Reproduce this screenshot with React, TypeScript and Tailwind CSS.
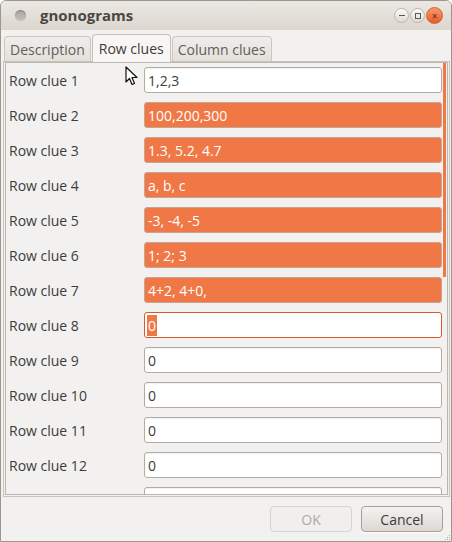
import React from 'react';

const font = { fontFamily: '"Open Sans", "Liberation Sans", sans-serif' };

type Clue = { value: string; bad?: boolean; focus?: boolean };

const clues: Clue[] = [
  { value: '1,2,3' },
  { value: '100,200,300', bad: true },
  { value: '1.3, 5.2, 4.7', bad: true },
  { value: 'a, b, c', bad: true },
  { value: '-3, -4, -5', bad: true },
  { value: '1; 2; 3', bad: true },
  { value: '4+2, 4+0,', bad: true },
  { value: '0', focus: true },
  { value: '0' },
  { value: '0' },
  { value: '0' },
  { value: '0' },
  { value: '' },
];

function Entry({ clue }: { clue: Clue }) {
  if (clue.bad) {
    return (
      <div className="flex h-[26px] w-[298px] items-center rounded-[3px] border border-[#c9a491] bg-[#f07846] px-[3px] text-[14px] text-white">
        {clue.value}
      </div>
    );
  }
  if (clue.focus) {
    return (
      <div className="flex h-[26px] w-[298px] items-center rounded-[3px] border border-[#d9592c] bg-white px-[2px] text-[14px]">
        <span className="bg-[#f07846] px-[1px] text-white">{clue.value}</span>
      </div>
    );
  }
  return (
    <div className="flex h-[26px] w-[298px] items-center rounded-[3px] border border-[#b4aca4] bg-white px-[3px] text-[14px] text-[#3c3c3c] shadow-[inset_0_1px_1px_rgba(0,0,0,0.06)]">
      {clue.value}
    </div>
  );
}

function Tab({ label, active }: { label: string; active?: boolean }) {
  if (active) {
    return (
      <div className="relative z-10 -mb-px flex h-[28px] items-center rounded-t-[4px] border border-b-0 border-[#c8c2ba] bg-[#f7f6f5] px-[6px] text-[14px] text-[#3c3c3c]">
        {label}
      </div>
    );
  }
  return (
    <div className="flex h-[25px] items-center rounded-t-[4px] border border-b-0 border-[#cdc7bf] bg-gradient-to-b from-[#efedea] to-[#e3e0dc] px-[5px] text-[14px] text-[#5f5e5b]">
      {label}
    </div>
  );
}

export default function App() {
  return (
    <div
      style={font}
      className="flex h-[542px] w-[452px] flex-col overflow-hidden rounded-t-[6px] border border-[#9e978e] bg-[#f2f1f0] text-[#3c3c3c]"
    >
      {/* title bar */}
      <div className="flex h-[29px] shrink-0 items-center bg-gradient-to-b from-[#ebe8e3] to-[#dcd7cf] pl-[14px] pr-[8px]">
        <div className="h-[11px] w-[11px] rounded-full bg-gradient-to-b from-[#a9a59e] to-[#c7c3bc] shadow-[inset_0_1px_1px_rgba(0,0,0,0.25)]" />
        <div className="ml-[14px] text-[15px] font-bold text-[#4a4843]">gnonograms</div>
        <div className="ml-auto flex items-center gap-[1px]">
          <div className="flex h-[15px] w-[15px] items-center justify-center rounded-full border border-[#b9b4ac] bg-gradient-to-b from-[#fbfaf9] to-[#dedad4]">
            <div className="h-px w-[6px] bg-[#5b5953]" />
          </div>
          <div className="flex h-[15px] w-[15px] items-center justify-center rounded-full border border-[#b9b4ac] bg-gradient-to-b from-[#fbfaf9] to-[#dedad4]">
            <div className="h-[6px] w-[6px] border border-[#5b5953]" />
          </div>
          <div className="flex h-[17px] w-[17px] items-center justify-center rounded-full border border-[#d2622f] bg-gradient-to-b from-[#f49a6c] to-[#e9592a] text-[10px] leading-none text-[#6b2a10]">
            ×
          </div>
        </div>
      </div>

      {/* tabs */}
      <div className="mt-[4px] flex shrink-0 items-end gap-[1px] pl-[3px]">
        <Tab label="Description" />
        <Tab label="Row clues" active />
        <Tab label="Column clues" />
      </div>

      {/* notebook page */}
      <div className="ml-[2px] mr-[1px] flex h-[436px] shrink-0 flex-col border border-[#c8c2ba] bg-[#f2f1f0]">
        <div className="relative mx-[1px] mb-[1px] flex flex-1 overflow-hidden border border-[#bdb6ae]">
          <div className="flex flex-1 flex-col gap-[9px] pl-[3px] pt-[4px]">
            {clues.map((c, i) => (
              <div key={i} className="flex items-center">
                {/* last row is scrolled mostly out of view, its label is hidden */}
                <div className="w-[135px] text-[14px] text-[#3c3c3c]">{i < 12 ? `Row clue ${i + 1}` : ''}</div>
                <Entry clue={c} />
              </div>
            ))}
          </div>
          <div className="absolute right-[1px] top-0 h-[214px] w-[3px] bg-[#f07846]" />
          {/* mouse pointer */}
          <svg className="absolute left-[119px] top-[3px]" width="14" height="20" viewBox="0 0 14 20">
            <path d="M1 1 L1 16 L4.5 12.5 L7 18.5 L9.5 17.5 L7 11.5 L12 11.5 Z" fill="white" stroke="#111" strokeWidth="1.2" strokeLinejoin="round" />
          </svg>
        </div>
      </div>

      {/* buttons */}
      <div className="relative flex flex-1 items-start justify-end gap-[9px] pr-[8px] pt-[9px]">
        <div className="flex h-[26px] w-[82px] items-center justify-center rounded-[4px] border border-[#d8d3cd] bg-[#f0efed] text-[14px] text-[#aeaaa5]">
          OK
        </div>
        <div className="flex h-[26px] w-[82px] items-center justify-center rounded-[4px] border border-[#a8a098] bg-gradient-to-b from-[#f4f3f1] to-[#dcd8d3] text-[14px] text-[#3c3c3c] shadow-[0_1px_0_rgba(255,255,255,0.8)]">
          Cancel
        </div>
        <div className="absolute bottom-[1px] right-[1px] grid grid-cols-3 gap-[1px]">
          {Array.from({ length: 9 }).map((_, i) => (
            <div key={i} className={`h-px w-px ${i % 3 + Math.floor(i / 3) >= 2 ? 'bg-[#b0aaa2]' : 'bg-transparent'}`} />
          ))}
        </div>
      </div>
    </div>
  );
}
